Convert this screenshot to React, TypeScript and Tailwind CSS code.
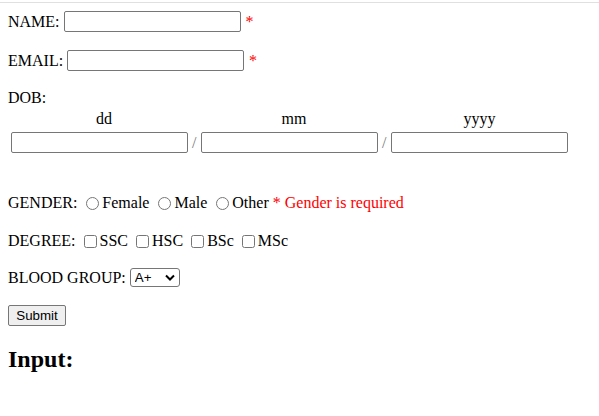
import React from "react";

const inputCls =
  "w-[177px] h-[21px] border border-[#767676] rounded-[2px] bg-white px-[2px] font-['Liberation_Sans',Arial,sans-serif] text-[13.33px] outline-none";

function DateCol({ label, slash }: { label: string; slash: boolean }) {
  return (
    <div className={slash ? "w-[186px] flex flex-col" : "w-[177px] flex flex-col"}>
      <div className="h-[18px] leading-[18px] text-center">{label}</div>
      <div className="mt-[4px] flex items-center">
        <input type="text" className={inputCls} />
        {slash && <span className="ml-[4px] leading-[18px] text-[#777]">/</span>}
      </div>
    </div>
  );
}

export default function App() {
  return (
    <div className="min-h-[416px] w-[599px] bg-white text-black font-['Liberation_Serif','Times_New_Roman',serif] text-[16px] leading-[18px]">
      <div className="h-[2px]" />
      <div className="h-px bg-[#e0e0e0]" />
      <div className="pl-[8px]">
        <div className="mt-[8px] h-[21px] flex items-center">
          <span>NAME:</span>
          <input type="text" className={"ml-[4px] " + inputCls} />
          <span className="ml-[5px] text-[#ff0000]">*</span>
        </div>
        <div className="mt-[18px] h-[21px] flex items-center">
          <span>EMAIL:</span>
          <input type="text" className={"ml-[4px] " + inputCls} />
          <span className="ml-[5px] text-[#ff0000]">*</span>
        </div>
        <div className="mt-[18px] h-[18px] flex items-center">
          <span>DOB:</span>
        </div>
        <div className="mt-[3px] ml-[3px] flex gap-[4px]">
          <DateCol label="dd" slash />
          <DateCol label="mm" slash />
          <DateCol label="yyyy" slash={false} />
        </div>
        <div className="mt-[41px] h-[18px] flex items-center">
          <span>GENDER:</span>
          <input type="radio" name="gender" className="ml-[9px] mr-[3px] w-[13px] h-[13px]" />
          <span>Female</span>
          <input type="radio" name="gender" className="ml-[9px] mr-[3px] w-[13px] h-[13px]" />
          <span>Male</span>
          <input type="radio" name="gender" className="ml-[9px] mr-[3px] w-[13px] h-[13px]" />
          <span>Other</span>
          <span className="ml-[4px] text-[#ff0000] whitespace-pre">* Gender is required</span>
        </div>
        <div className="mt-[20px] h-[18px] flex items-center">
          <span>DEGREE:</span>
          <input type="checkbox" className="ml-[8px] mr-[3px] w-[13px] h-[13px]" />
          <span>SSC</span>
          <input type="checkbox" className="ml-[8px] mr-[3px] w-[13px] h-[13px]" />
          <span>HSC</span>
          <input type="checkbox" className="ml-[8px] mr-[3px] w-[13px] h-[13px]" />
          <span>BSc</span>
          <input type="checkbox" className="ml-[8px] mr-[3px] w-[13px] h-[13px]" />
          <span>MSc</span>
        </div>
        <div className="mt-[18px] h-[19px] flex items-center">
          <span>BLOOD GROUP:</span>
          <div className="relative ml-[4px] w-[50px] h-[19px]">
            <select
              defaultValue="A+"
              className="appearance-none w-[50px] h-[19px] border border-[#767676] rounded-[3px] bg-white pl-[4px] font-['Liberation_Sans',Arial,sans-serif] text-[13.33px] leading-[15px] text-black outline-none"
            >
              <option>A+</option>
              <option>A-</option>
              <option>B+</option>
              <option>B-</option>
              <option>O+</option>
              <option>O-</option>
              <option>AB+</option>
              <option>AB-</option>
            </select>
            <svg
              className="absolute right-[5px] top-[6px] pointer-events-none"
              width="10"
              height="7"
              viewBox="0 0 10 7"
            >
              <polyline points="1,1.5 5,5.5 9,1.5" fill="none" stroke="#000" strokeWidth="2" />
            </svg>
          </div>
        </div>
        <div className="mt-[18px] h-[21px] flex items-center">
          <button
            type="button"
            className="w-[58px] h-[21px] border border-[#767676] rounded-[2px] bg-[#efefef] font-['Liberation_Sans',Arial,sans-serif] text-[13.33px] leading-[15px] text-black"
          >
            Submit
          </button>
        </div>
        <h2 className="mt-[19px] h-[28px] leading-[28px] text-[24px] font-bold">Input:</h2>
      </div>
    </div>
  );
}
